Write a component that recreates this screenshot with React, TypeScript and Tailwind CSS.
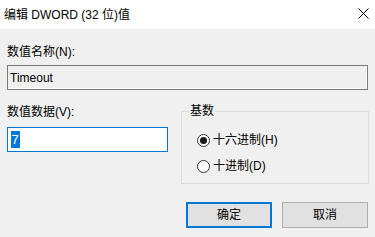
import React from "react";

const font = { fontFamily: '"Liberation Sans", "Noto Sans CJK SC", sans-serif' };

function Radio({ checked, label }: { checked?: boolean; label: string }) {
  return (
    <div className="flex items-center h-[14px]">
      <span className="w-[13px] h-[13px] rounded-full border border-[#333333] bg-white flex items-center justify-center shrink-0">
        {checked && <span className="w-[7px] h-[7px] rounded-full bg-[#1a1a1a]" />}
      </span>
      <span className="ml-[3px] text-[12px] leading-[14px] text-black">{label}</span>
    </div>
  );
}

export default function App() {
  return (
    <div className="w-[375px] h-[237px] bg-[#f0f0f0] flex flex-col text-black overflow-hidden" style={font}>
      <div className="h-[29px] bg-white flex items-center justify-between pl-[4px] pr-[6px] shrink-0">
        <span className="text-[12px] leading-[16px]">编辑 DWORD (32 位)值</span>
        <svg width="11" height="11" viewBox="0 0 11 11" className="mb-[3px]">
          <path d="M0.5 0.5 L10.5 10.5 M10.5 0.5 L0.5 10.5" stroke="#000" strokeWidth="1" fill="none" />
        </svg>
      </div>
      <div className="px-[7px] pt-[15px] flex flex-col">
        <div className="text-[12px] leading-[16px]">数值名称(N):</div>
        <div className="mt-[5px] h-[25px] border border-[#7a7a7a] flex items-center pl-[2px] text-[12px] shadow-[inset_-1px_-1px_0_#ffffff]">
          Timeout
        </div>
        <div className="mt-[14px] flex">
          <div className="w-[161px] flex flex-col shrink-0">
            <div className="text-[12px] leading-[16px]">数值数据(V):</div>
            <div className="mt-[7px] h-[25px] border-[1.5px] border-[#0078d7] bg-white flex items-center pl-[2.5px]">
              <span className="bg-[#0078d7] text-white text-[13px] leading-[17px] px-[1px]">7</span>
            </div>
          </div>
          <div className="ml-[13px] w-[188px] shrink-0 mt-[7px] h-[73px] border border-[#dcdcdc] relative pl-[15px] pt-[21px]">
            <span className="absolute left-[7px] top-[-9px] px-[1px] bg-[#f0f0f0] text-[12px] leading-[16px]">基数</span>
            <Radio checked label="十六进制(H)" />
            <div className="mt-[12px]">
              <Radio label="十进制(D)" />
            </div>
          </div>
        </div>
        <div className="mt-[18px] flex justify-end gap-[10px]">
          <button className="w-[86px] h-[26px] bg-[#e1e1e1] border-2 border-[#0078d7] text-[12px] leading-[16px] flex items-center justify-center">
            确定
          </button>
          <button className="w-[86px] h-[26px] bg-[#e1e1e1] border border-[#adadad] text-[12px] leading-[16px] flex items-center justify-center">
            取消
          </button>
        </div>
      </div>
    </div>
  );
}
